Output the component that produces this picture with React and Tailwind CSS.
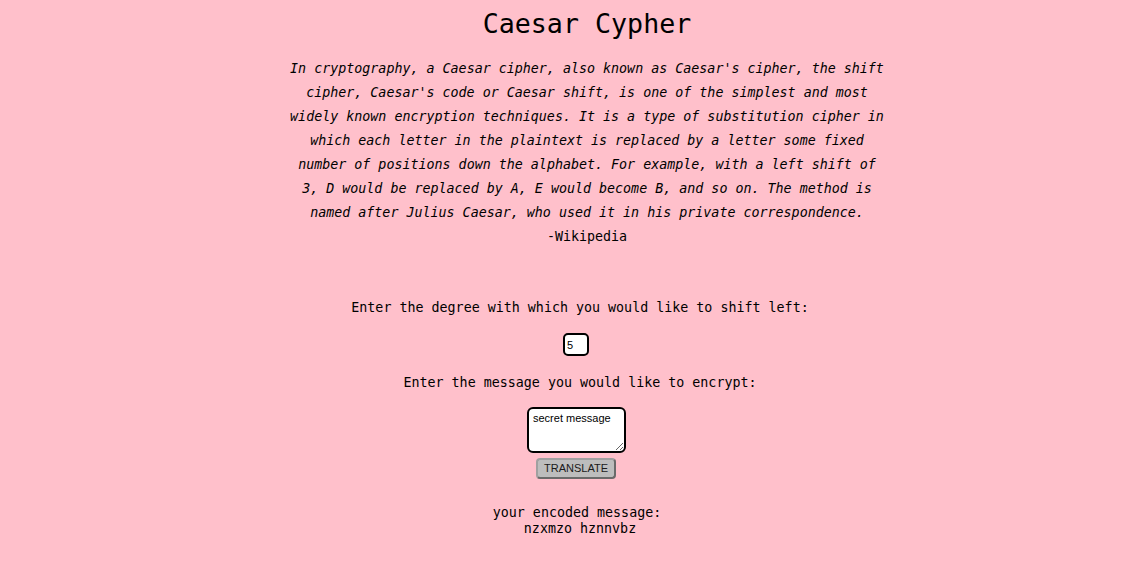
export default function App() {
  const mono = { fontFamily: '"DejaVu Sans Mono", "Liberation Mono", monospace' };
  return (
    <div className="min-h-[571px] w-full bg-[#ffc0cb] text-black flex flex-col items-center" style={mono}>
      <h1 className="pt-[8px] ml-[28px] text-[26.67px] leading-[31px] font-normal">Caesar Cypher</h1>
      <div className="ml-[28px] mt-[18px] w-[600px] text-center text-[13.33px] leading-[24px]">
        <p className="italic">
          In cryptography, a Caesar cipher, also known as Caesar's cipher, the shift cipher, Caesar's code or Caesar shift, is one of the simplest and most widely known encryption techniques. It is a type of substitution cipher in which each letter in the plaintext is replaced by a letter some fixed number of positions down the alphabet. For example, with a left shift of 3, D would be replaced by A, E would become B, and so on. The method is named after Julius Caesar, who used it in his private correspondence.
        </p>
        <p>-Wikipedia</p>
      </div>
      <p className="ml-[14px] mt-[51px] text-[13.33px] leading-[16px]">Enter the degree with which you would like to shift left:</p>
      <input
        type="text"
        defaultValue="5"
        className="ml-[6px] mt-[17px] w-[26px] h-[23px] border-2 border-black rounded-[5px] bg-white pl-[2px] text-[11px] text-black outline-none"
        style={{ fontFamily: '"Liberation Sans", Arial, sans-serif' }}
      />
      <p className="ml-[14px] mt-[19px] text-[13.33px] leading-[16px]">Enter the message you would like to encrypt:</p>
      <textarea
        defaultValue="secret message"
        className="ml-[7px] mt-[16px] w-[99px] h-[46px] border-2 border-black rounded-[6px] bg-white px-[4px] pt-[3px] text-[11px] leading-[13px] text-black outline-none block"
        style={{ fontFamily: '"Liberation Sans", Arial, sans-serif' }}
      />
      <button
        className="ml-[6px] mt-[5px] w-[80px] h-[21px] rounded-[4px] bg-[#bdbdbd] border-2 border-[#a0a0a0] border-r-[#6a6a6a] border-b-[#6a6a6a] text-[11px] leading-[15px] text-[#1a1a1a] flex items-center justify-center"
        style={{ fontFamily: '"Liberation Sans", Arial, sans-serif' }}
      >
        TRANSLATE
      </button>
      <p className="ml-[8px] mt-[26px] text-[13.33px] leading-[16px]">your encoded message:</p>
      <p className="ml-[14px] text-[13.33px] leading-[16px]">nzxmzo hznnvbz</p>
    </div>
  );
}
